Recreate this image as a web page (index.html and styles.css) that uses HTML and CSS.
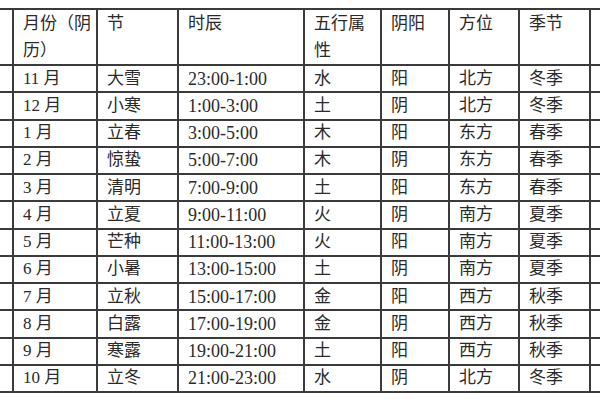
FILE: index.html
```html
<!DOCTYPE html>
<html lang="zh-CN">
<head>
<meta charset="utf-8">
<title>十二月令表</title>
<link rel="stylesheet" href="styles.css">
</head>
<body>
<div class="sheet">
<table class="calendar">
  <colgroup>
    <col class="c-edge"><col class="c-month"><col class="c-term"><col class="c-time"><col class="c-elem"><col class="c-yy"><col class="c-dir"><col class="c-season"><col class="c-more">
  </colgroup>
  <thead>
    <tr>
      <th class="edge"></th>
      <th>月份（阴历）</th>
      <th>节</th>
      <th>时辰</th>
      <th>五行属性</th>
      <th>阴阳</th>
      <th>方位</th>
      <th>季节</th>
      <th class="more"></th>
    </tr>
  </thead>
  <tbody>
    <tr><td class="edge"></td><td>11 月</td><td>大雪</td><td class="num">23:00-1:00</td><td>水</td><td>阳</td><td>北方</td><td>冬季</td><td class="more"></td></tr>
    <tr><td class="edge"></td><td>12 月</td><td>小寒</td><td class="num">1:00-3:00</td><td>土</td><td>阴</td><td>北方</td><td>冬季</td><td class="more"></td></tr>
    <tr><td class="edge"></td><td>1 月</td><td>立春</td><td class="num">3:00-5:00</td><td>木</td><td>阳</td><td>东方</td><td>春季</td><td class="more"></td></tr>
    <tr><td class="edge"></td><td>2 月</td><td>惊蛰</td><td class="num">5:00-7:00</td><td>木</td><td>阴</td><td>东方</td><td>春季</td><td class="more"></td></tr>
    <tr><td class="edge"></td><td>3 月</td><td>清明</td><td class="num">7:00-9:00</td><td>土</td><td>阳</td><td>东方</td><td>春季</td><td class="more"></td></tr>
    <tr><td class="edge"></td><td>4 月</td><td>立夏</td><td class="num">9:00-11:00</td><td>火</td><td>阴</td><td>南方</td><td>夏季</td><td class="more"></td></tr>
    <tr><td class="edge"></td><td>5 月</td><td>芒种</td><td class="num">11:00-13:00</td><td>火</td><td>阳</td><td>南方</td><td>夏季</td><td class="more"></td></tr>
    <tr><td class="edge"></td><td>6 月</td><td>小暑</td><td class="num">13:00-15:00</td><td>土</td><td>阴</td><td>南方</td><td>夏季</td><td class="more"></td></tr>
    <tr><td class="edge"></td><td>7 月</td><td>立秋</td><td class="num">15:00-17:00</td><td>金</td><td>阳</td><td>西方</td><td>秋季</td><td class="more"></td></tr>
    <tr><td class="edge"></td><td>8 月</td><td>白露</td><td class="num">17:00-19:00</td><td>金</td><td>阴</td><td>西方</td><td>秋季</td><td class="more"></td></tr>
    <tr><td class="edge"></td><td>9 月</td><td>寒露</td><td class="num">19:00-21:00</td><td>土</td><td>阳</td><td>西方</td><td>秋季</td><td class="more"></td></tr>
    <tr><td class="edge"></td><td>10 月</td><td>立冬</td><td class="num">21:00-23:00</td><td>水</td><td>阴</td><td>北方</td><td>冬季</td><td class="more"></td></tr>
  </tbody>
</table>
</div>
</body>
</html>
```

FILE: styles.css
```css
html, body {
  margin: 0;
  padding: 0;
  background: #ffffff;
}

.sheet {
  width: 600px;
  height: 400px;
  overflow: hidden;
  padding-top: 8px;
  box-sizing: border-box;
}

.calendar {
  border-collapse: collapse;
  table-layout: fixed;
  width: 640px;
  font-family: "Liberation Serif", "Noto Sans CJK SC", serif;
  font-size: 17px;
  color: #2a2a2a;
}

.c-edge { width: 13px; }
.c-month { width: 84px; }
.c-term { width: 81px; }
.c-time { width: 126px; }
.c-elem { width: 77px; }
.c-yy { width: 68px; }
.c-dir { width: 70px; }
.c-season { width: 71px; }
.c-more { width: 50px; }

.calendar th,
.calendar td {
  border: 2px solid #3b3b3b;
  padding: 0 4px 0 9px;
  text-align: left;
  font-weight: normal;
  overflow: hidden;
  white-space: normal;
}

.calendar th {
  height: 51px;
  vertical-align: top;
  line-height: 27px;
}

.calendar td {
  height: 25.25px;
  vertical-align: middle;
  line-height: 22px;
}

.calendar .edge {
  border-left: none;
  padding: 0;
}

.calendar .more {
  border-right: none;
}

.calendar .num {
  font-size: 18px;
}
```
